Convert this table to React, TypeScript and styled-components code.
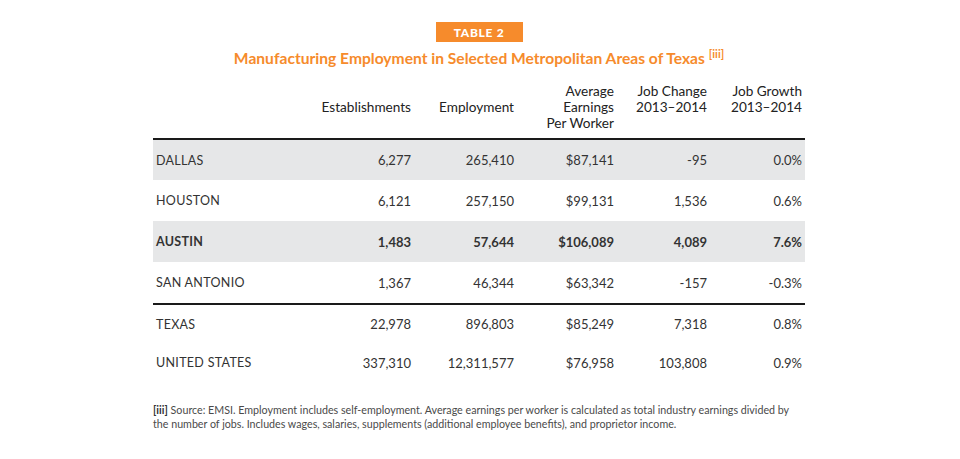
import React from "react";
import styled, { createGlobalStyle } from "styled-components";

const Global = createGlobalStyle`
  html, body { margin: 0; padding: 0; background: #ffffff; }
  body { font-family: "Lato", "Open Sans", Arial, sans-serif; color: #333333; }
`;

const Page = styled.div`
  width: 960px;
  height: 459px;
  display: flex;
  flex-direction: column;
  align-items: center;
  box-sizing: border-box;
  padding-top: 22px;
  padding-right: 2px;
`;

const Badge = styled.div`
  width: 87px;
  height: 20px;
  background: #f68b2c;
  color: #ffffff;
  font-weight: 900;
  font-size: 12px;
  letter-spacing: 0.7px;
  display: flex;
  align-items: center;
  justify-content: center;
`;

const Title = styled.h1`
  margin: 2px 0 0 0;
  font-size: 15.6px;
  font-weight: 700;
  color: #f68b2c;
  line-height: 20px;
  sup {
    font-size: 11px;
    vertical-align: 6px;
    margin-left: 4px;
  }
`;

const Table = styled.table`
  margin-top: 15px;
  width: 652px;
  border-collapse: collapse;
  table-layout: fixed;
  font-size: 13px;
  color: #333333;
`;

const HeadCell = styled.th`
  font-weight: 400;
  font-size: 13.6px;
  color: #222222;
  text-align: right;
  vertical-align: bottom;
  line-height: 16px;
  padding: 0 3px 7px 0;
  border-bottom: 2px solid #1a1a1a;
`;

const Row = styled.tr<{ $shade?: boolean; $bold?: boolean; $divider?: boolean; $h: number }>`
  height: ${(p) => p.$h}px;
  background: ${(p) => (p.$shade ? "#e6e7e8" : "transparent")};
  font-weight: ${(p) => (p.$bold ? 700 : 400)};
  border-bottom: ${(p) => (p.$divider ? "2px solid #1a1a1a" : "none")};
`;

const NameCell = styled.td`
  text-align: left;
  padding: 0 0 0 3px;
  letter-spacing: 0.3px;
  font-size: 12.5px;
`;

const NumCell = styled.td`
  text-align: right;
  padding: 0 3px 0 0;
`;

const Note = styled.p`
  margin: 21px 0 0 0;
  width: 652px;
  font-size: 10.7px;
  line-height: 14px;
  color: #4a4a4a;
  b { font-weight: 700; color: #333333; }
`;

type R = { name: string; v: string[]; shade?: boolean; bold?: boolean; divider?: boolean; h: number };

const rows: R[] = [
  { name: "DALLAS", v: ["6,277", "265,410", "$87,141", "-95", "0.0%"], shade: true, h: 41 },
  { name: "HOUSTON", v: ["6,121", "257,150", "$99,131", "1,536", "0.6%"], h: 41 },
  { name: "AUSTIN", v: ["1,483", "57,644", "$106,089", "4,089", "7.6%"], shade: true, bold: true, h: 41 },
  { name: "SAN ANTONIO", v: ["1,367", "46,344", "$63,342", "-157", "-0.3%"], divider: true, h: 42 },
  { name: "TEXAS", v: ["22,978", "896,803", "$85,249", "7,318", "0.8%"], h: 39 },
  { name: "UNITED STATES", v: ["337,310", "12,311,577", "$76,958", "103,808", "0.9%"], h: 39 },
];

export default function App() {
  return (
    <>
      <Global />
      <Page>
        <Badge>TABLE 2</Badge>
        <Title>
          Manufacturing Employment in Selected Metropolitan Areas of Texas<sup>[iii]</sup>
        </Title>
        <Table>
          <colgroup>
            <col style={{ width: 160 }} />
            <col style={{ width: 101 }} />
            <col style={{ width: 103 }} />
            <col style={{ width: 100 }} />
            <col style={{ width: 93 }} />
            <col style={{ width: 95 }} />
          </colgroup>
          <thead>
            <tr>
              <HeadCell />
              <HeadCell>
                Establishments
                <br />
                &nbsp;
              </HeadCell>
              <HeadCell>
                Employment
                <br />
                &nbsp;
              </HeadCell>
              <HeadCell>
                Average
                <br />
                Earnings
                <br />
                Per Worker
              </HeadCell>
              <HeadCell>
                Job Change
                <br />
                2013–2014
                <br />
                &nbsp;
              </HeadCell>
              <HeadCell>
                Job Growth
                <br />
                2013–2014
                <br />
                &nbsp;
              </HeadCell>
            </tr>
          </thead>
          <tbody>
            {rows.map((r) => (
              <Row key={r.name} $shade={r.shade} $bold={r.bold} $divider={r.divider} $h={r.h}>
                <NameCell>{r.name}</NameCell>
                {r.v.map((x, i) => (
                  <NumCell key={i}>{x}</NumCell>
                ))}
              </Row>
            ))}
          </tbody>
        </Table>
        <Note>
          <b>[iii]</b> Source: EMSI. Employment includes self-employment. Average earnings per worker is calculated as total industry earnings divided by
          <br />
          the number of jobs. Includes wages, salaries, supplements (additional employee benefits), and proprietor income.
        </Note>
      </Page>
    </>
  );
}
